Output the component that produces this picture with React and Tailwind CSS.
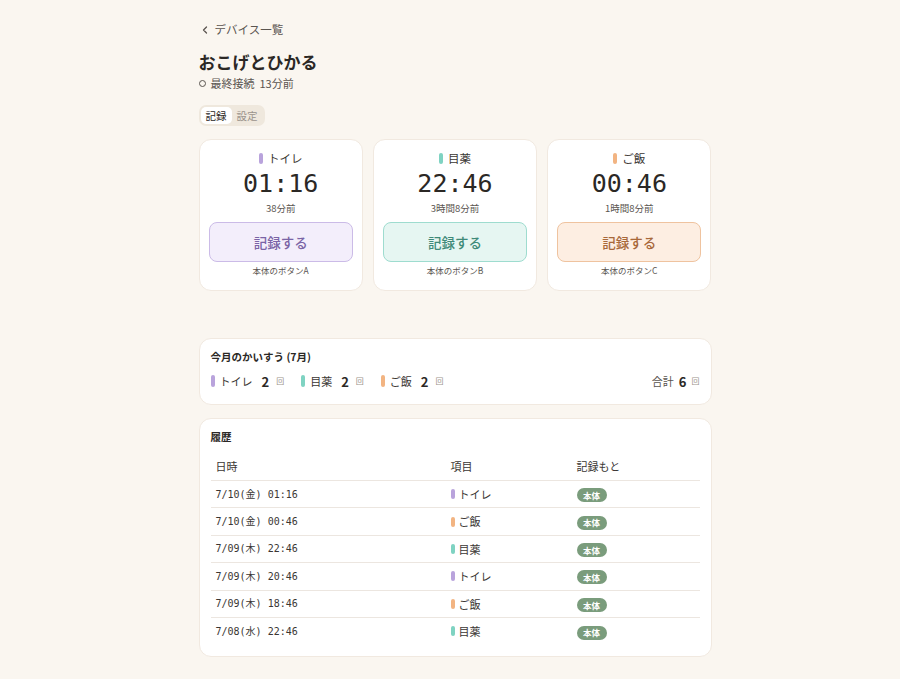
import React, { useState } from 'react';

const SANS = { fontFamily: '"Noto Sans CJK JP", "Noto Sans", sans-serif' };
const MONO = { fontFamily: '"DejaVu Sans Mono", "Noto Sans CJK JP", monospace' };

const KINDS = {
  toilet: { name: 'トイレ', bar: 'bg-[#b9a3dc]' },
  med: { name: '目薬', bar: 'bg-[#7fd3c2]' },
  meal: { name: 'ご飯', bar: 'bg-[#f2b482]' },
};

const cards = [
  {
    kind: 'toilet',
    time: '01:16',
    ago: '38分前',
    btn: 'bg-[#f3eefb] border-[#cbbbe7] text-[#7a64a6]',
    label: '本体のボタンA',
  },
  {
    kind: 'med',
    time: '22:46',
    ago: '3時間8分前',
    btn: 'bg-[#e6f6f2] border-[#9edccf] text-[#3f8a79]',
    label: '本体のボタンB',
  },
  {
    kind: 'meal',
    time: '00:46',
    ago: '1時間8分前',
    btn: 'bg-[#fdeee2] border-[#efc39f] text-[#a8683a]',
    label: '本体のボタンC',
  },
];

const history = [
  { at: '7/10(金) 01:16', kind: 'toilet' },
  { at: '7/10(金) 00:46', kind: 'meal' },
  { at: '7/09(木) 22:46', kind: 'med' },
  { at: '7/09(木) 20:46', kind: 'toilet' },
  { at: '7/09(木) 18:46', kind: 'meal' },
  { at: '7/08(水) 22:46', kind: 'med' },
];

function Bar({ kind, h = 'h-[11px]' }) {
  return <span className={`inline-block w-[4px] ${h} rounded-full ${KINDS[kind].bar}`} />;
}

function Card({ c }) {
  return (
    <div className="flex-1 bg-white border border-[#f1e9e0] rounded-[12px] px-[9px] pt-[13px] pb-[15px] flex flex-col items-center">
      <div className="flex items-center gap-[5px] text-[11.5px] text-[#3a3633] leading-none">
        <Bar kind={c.kind} />
        <span>{KINDS[c.kind].name}</span>
      </div>
      <div style={MONO} className="text-[25px] text-[#2b2825] leading-none mt-[6px]">
        {c.time}
      </div>
      <div className="text-[9.5px] text-[#5a5550] mt-[8px] leading-none">{c.ago}</div>
      <button
        className={`w-full h-[40px] mt-[9px] rounded-[8px] border text-[13.5px] font-medium ${c.btn}`}
      >
        記録する
      </button>
      <div className="text-[8.5px] text-[#5a5550] mt-[4px] leading-none">{c.label}</div>
    </div>
  );
}

export default function App() {
  const [tab, setTab] = useState('record');

  return (
    <div style={SANS} className="min-h-[679px] bg-[#faf6f0] text-[#2f2b28]">
      <div className="w-[513px] mx-auto pl-[10px] box-content pt-[22px] pb-[22px]">
        <div className="flex items-center gap-[6px] text-[11.5px] text-[#5a5550] h-[16px] ml-[2px]">
          <svg width="8" height="8" viewBox="0 0 8 8" fill="none" stroke="#5a5550" strokeWidth="1.3">
            <path d="M5.5 1 L2.5 4 L5.5 7" strokeLinecap="round" strokeLinejoin="round" />
          </svg>
          <span>デバイス一覧</span>
        </div>

        <h1 className="text-[17px] font-bold text-[#2b2825] mt-[13px] leading-[22px]">
          おこげとひかる
        </h1>
        <div className="flex items-center gap-[5px] text-[11px] text-[#5a5550] mt-[3px] leading-[14px]">
          <span className="inline-block w-[7px] h-[7px] rounded-full border border-[#5a5550]" />
          <span>最終接続&nbsp; 13分前</span>
        </div>

        <div className="inline-flex items-center bg-[#efe8dd] rounded-[7px] p-[2px] mt-[15px] text-[10.5px]">
          <button
            onClick={() => setTab('record')}
            className={`px-[5px] h-[17px] rounded-[5px] ${tab === 'record' ? 'bg-white text-[#2b2825]' : 'text-[#9a938b]'}`}
          >
            記録
          </button>
          <button
            onClick={() => setTab('settings')}
            className={`px-[5px] h-[17px] rounded-[5px] ${tab === 'settings' ? 'bg-white text-[#2b2825]' : 'text-[#9a938b]'}`}
          >
            設定
          </button>
        </div>

        <div className="flex gap-[10px] mt-[13px]">
          {cards.map((c) => (
            <Card key={c.kind} c={c} />
          ))}
        </div>

        {/* monthly count */}
        <div className="bg-white border border-[#f1e9e0] rounded-[12px] mt-[47px] px-[11px] pt-[11px] pb-[16px]">
          <div className="text-[10.5px] font-bold text-[#2b2825] leading-[14px]">今月のかいすう (7月)</div>
          <div className="flex items-center justify-between mt-[11px] text-[11px] leading-none">
            <div className="flex items-center gap-[17px]">
              {['toilet', 'med', 'meal'].map((k) => (
                <div key={k} className="flex items-center gap-[5px]">
                  <Bar kind={k} h="h-[12px]" />
                  <span className="text-[#3a3633]">{KINDS[k].name}</span>
                  <span className="font-bold text-[13px] ml-[4px] text-[#2b2825]">2</span>
                  <span className="text-[8px] text-[#9a938b] ml-[2px]">回</span>
                </div>
              ))}
            </div>
            <div className="flex items-center gap-[5px]">
              <span className="text-[#5a5550]">合計</span>
              <span className="font-bold text-[13px] text-[#2b2825]">6</span>
              <span className="text-[8px] text-[#9a938b]">回</span>
            </div>
          </div>
        </div>

        {/* history */}
        <div className="bg-white border border-[#f1e9e0] rounded-[12px] mt-[13px] px-[11px] pt-[11px] pb-[11px]">
          <div className="text-[10.5px] font-bold text-[#2b2825] leading-[14px]">履歴</div>
          <table className="w-full mt-[14px] text-[11px]">
            <thead>
              <tr className="border-b border-[#ece6e0] text-[#3a3633] text-left">
                <th className="font-normal pl-[5px] pb-[6px] w-[240px]">日時</th>
                <th className="font-normal pb-[6px] w-[126px]">項目</th>
                <th className="font-normal pb-[6px]">記録もと</th>
              </tr>
            </thead>
            <tbody>
              {history.map((h, i) => (
                <tr key={i} className={`h-[27.4px] ${i < history.length - 1 ? 'border-b border-[#ece6e0]' : ''}`}>
                  <td style={MONO} className="pl-[5px] text-[10px] text-[#3a3633]">
                    {h.at}
                  </td>
                  <td>
                    <div className="flex items-center gap-[4px] text-[#3a3633]">
                      <Bar kind={h.kind} h="h-[10px]" />
                      <span>{KINDS[h.kind].name}</span>
                    </div>
                  </td>
                  <td>
                    <span className="inline-flex items-center justify-center bg-[#7a9c7c] text-white text-[8.5px] font-bold rounded-full w-[30px] h-[14px]">
                      本体
                    </span>
                  </td>
                </tr>
              ))}
            </tbody>
          </table>
        </div>
      </div>
    </div>
  );
}
